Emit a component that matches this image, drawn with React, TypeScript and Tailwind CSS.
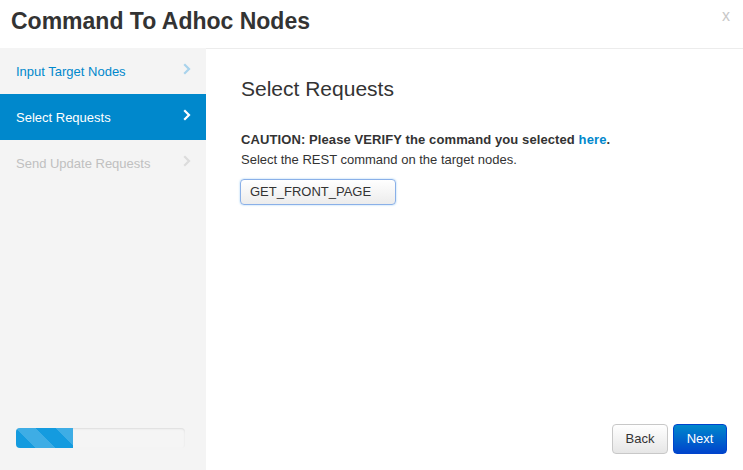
const steps = [
  { label: "Input Target Nodes", state: "done" },
  { label: "Select Requests", state: "active" },
  { label: "Send Update Requests", state: "todo" },
];

export default function App() {
  return (
    <div className="w-[743px] h-[470px] flex flex-col bg-white font-['Liberation_Sans',Arial,sans-serif] text-[#333]">
      {/* Header */}
      <div className="h-[48px] flex items-center justify-between pl-[11px] pr-[13px]">
        <h1 className="text-[23px] font-bold text-[#333] leading-none -mt-[6px]">Command To Adhoc Nodes</h1>
        <span className="text-[16px] text-[#c8c8c8] -mt-[16px]">x</span>
      </div>

      <div className="flex flex-1 min-h-0">
        {/* Sidebar */}
        <div className="w-[206px] bg-[#f4f4f4] flex flex-col justify-between">
          <ul>
            {steps.map((step) => (
              <li
                key={step.label}
                className={`h-[46px] flex items-center justify-between pl-[16px] pr-[14px] text-[13px] ${
                  step.state === "active"
                    ? "bg-[#0088cc] text-white"
                    : step.state === "done"
                    ? "text-[#0088cc]"
                    : "text-[#c0c0c0]"
                }`}
              >
                <span className="mt-[1px]">{step.label}</span>
                <ChevronIcon
                  className={`w-[10px] h-[12px] -mt-[5px] ${
                    step.state === "active"
                      ? "text-white"
                      : step.state === "done"
                      ? "text-[#a9d3ec]"
                      : "text-[#dcdcdc]"
                  }`}
                />
              </li>
            ))}
          </ul>

          <div className="pl-[16px] pr-[21px] pb-[22px]">
            <div className="h-[20px] rounded-[4px] bg-[#f5f5f5] shadow-[inset_0_1px_2px_rgba(0,0,0,0.1)] overflow-hidden">
              <div className="h-full w-[57px] bg-[#149bdf] bg-[linear-gradient(45deg,rgba(255,255,255,0.18)_25%,transparent_25%,transparent_50%,rgba(255,255,255,0.18)_50%,rgba(255,255,255,0.18)_75%,transparent_75%,transparent)] bg-[length:40px_40px]" />
            </div>
          </div>
        </div>

        {/* Content */}
        <div className="flex-1 border-t border-[#ececec] flex flex-col justify-between pl-[35px] pr-[16px] pb-[16px]">
          <div>
            <h2 className="text-[21px] text-[#333] mt-[29px] leading-none">Select Requests</h2>
            <p className="text-[13px] font-bold mt-[32px] leading-[18px] tracking-[0.1px]">
              CAUTION: Please VERIFY the command you selected{" "}
              <a href="#" className="text-[#0088cc]">here</a>.
            </p>
            <p className="text-[13px] leading-[18px] mt-[2px]">Select the REST command on the target nodes.</p>
            <div className="mt-[10px] w-[156px] h-[26px] -ml-[1px] rounded-[4px] border border-[#8ab0e8] bg-[linear-gradient(#ffffff,#ececec)] shadow-[0_0_2px_rgba(82,168,236,0.6)] flex items-center pl-[9px] text-[13px] text-[#333]">
              GET_FRONT_PAGE
            </div>
          </div>

          <div className="flex justify-end gap-[5px]">
            <button className="w-[56px] h-[30px] rounded-[4px] border border-[#c8c8c8] bg-[linear-gradient(#ffffff,#e6e6e6)] text-[13px] text-[#333]">
              Back
            </button>
            <button className="w-[54px] h-[30px] rounded-[4px] border border-[#0044cc] bg-[linear-gradient(#0088cc,#0044cc)] text-[13px] text-white">
              Next
            </button>
          </div>
        </div>
      </div>
    </div>
  );
}

function ChevronIcon(props: React.SVGProps<SVGSVGElement>) {
  return (
    <svg {...props} viewBox="0 0 10 12" fill="none" stroke="currentColor" strokeWidth="2.2" strokeLinecap="square">
      <path d="M3 2l4 4-4 4" />
    </svg>
  );
}
